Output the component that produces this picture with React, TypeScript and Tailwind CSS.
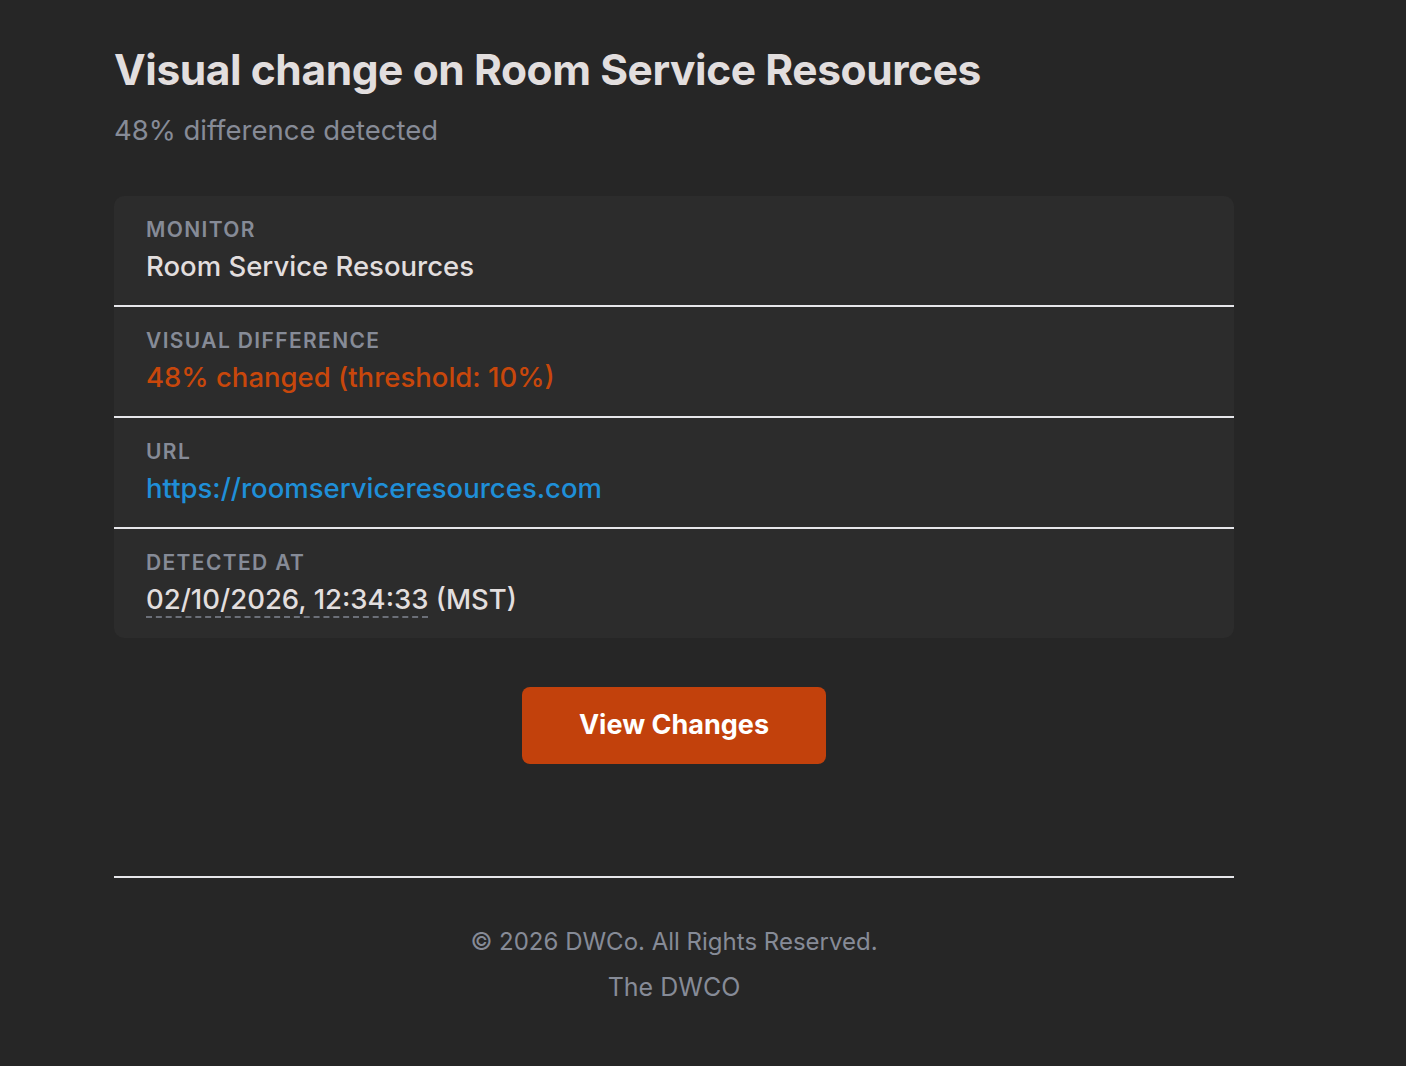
import React from "react";

const font = { fontFamily: "Inter, 'Noto Sans', sans-serif" };

function Row({ label, children, last }: { label: string; children: React.ReactNode; last?: boolean }) {
  return (
    <div className={`px-8 pt-5 pb-[21px] ${last ? "" : "border-b-2 border-[#e6e6ea]"}`}>
      <div className="text-[21px] leading-[28px] font-semibold tracking-[0.065em] text-[#868b97] uppercase">{label}</div>
      <div className="mt-1 text-[27.5px] leading-[36px] font-medium">{children}</div>
    </div>
  );
}

export default function App() {
  return (
    <div className="min-h-[1066px] w-full bg-[#262626]" style={font}>
      <div className="ml-[114px] w-[1120px] pt-[40px]">
        <h1 className="text-[42.5px] leading-[60px] font-bold text-[#e2dede] tracking-[-0.01em]">
          Visual change on Room Service Resources
        </h1>
        <p className="mt-[12px] text-[27.5px] leading-[36px] text-[#868b97]">48% difference detected</p>

        <div className="mt-[48px] rounded-[10px] bg-[#2c2c2c]">
          <Row label="Monitor">
            <span className="text-[#e2dede]">Room Service Resources</span>
          </Row>
          <Row label="Visual Difference">
            <span className="text-[#c8470b]">48% changed (threshold: 10%)</span>
          </Row>
          <Row label="URL">
            <span className="text-[#1f8fd8]">https://roomserviceresources.com</span>
          </Row>
          <Row label="Detected At" last>
            <span className="text-[#e2dede]">
              <span className="border-b-2 border-dashed border-[#6b6f78]">02/10/2026, 12:34:33</span> (MST)
            </span>
          </Row>
        </div>

        <div className="mt-[49px] flex justify-center">
          <div className="flex h-[77px] w-[304px] items-center justify-center rounded-[8px] bg-[#c2410c] text-[27px] font-bold text-white">
            View Changes
          </div>
        </div>

        <div className="mt-[112px] border-t-2 border-[#e6e6ea]" />
        <div className="pt-[47px] text-center text-[#868b97]">
          <div className="text-[24px] leading-[34px]">© 2026 DWCo. All Rights Reserved.</div>
          <div className="mt-[11px] text-[25px] leading-[34px]">The DWCO</div>
        </div>
      </div>
    </div>
  );
}
